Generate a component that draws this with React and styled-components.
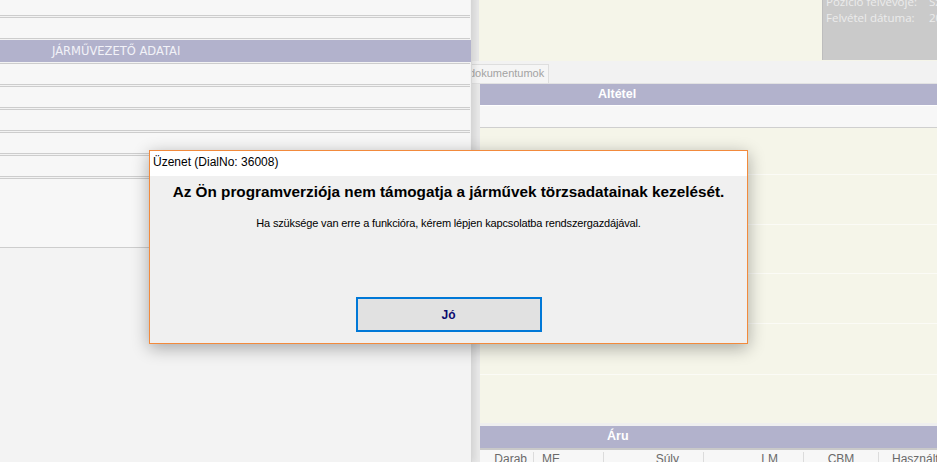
import React from "react";
import styled, { createGlobalStyle } from "styled-components";

const GlobalStyle = createGlobalStyle`
  html, body {
    margin: 0;
    padding: 0;
    background: #f3f3f3;
    overflow: hidden;
  }
  * { box-sizing: border-box; }
`;

const Screen = styled.div`
  position: relative;
  width: 937px;
  height: 462px;
  overflow: hidden;
  display: flex;
  background: #f3f3f3;
  font-family: "Liberation Sans", Arial, sans-serif;
`;

// left form column
const LeftPanel = styled.div`
  position: relative;
  z-index: 1;
  width: 472px;
  flex-shrink: 0;
  display: flex;
  flex-direction: column;
  gap: 1px;
  margin-top: -6px;
  background: #f3f3f3;
  border-right: 1px solid #d6d6d6;
  box-shadow: 3px 0 6px rgba(0, 0, 0, 0.09);
`;

const Field = styled.div`
  height: ${(p) => p.$h || 22}px;
  margin-right: 1px;
  background: #f7f7f7;
  border-top: 1px solid #cdcdcd;
  border-bottom: 1px solid #cdcdcd;
`;

const SectionBar = styled.div`
  height: 22px;
  background: #b2b2cc;
  color: #f2f2f8;
  font-family: "DejaVu Sans", Verdana, sans-serif;
  font-size: 11.5px;
  line-height: 22px;
  padding-left: 52px;
`;

// right detail column
const RightPanel = styled.div`
  flex: 1;
  min-width: 0;
  display: flex;
  flex-direction: column;
  background: #e9e9e9;
`;

const TopArea = styled.div`
  height: 61px;
  margin-left: 7px;
  display: flex;
  background: #f5f5e9;
`;

const Spacer = styled.div`
  flex: 1;
`;

const InfoBox = styled.div`
  width: 115px;
  flex-shrink: 0;
  height: 60px;
  background: #cacaca;
  border-left: 1px solid #bdbdbd;
  padding-left: 3px;
  overflow: hidden;
  color: #ececec;
  font-family: "Open Sans", sans-serif;
  font-size: 11.5px;
`;

const InfoGrid = styled.div`
  margin-top: -6px;
  display: grid;
  grid-template-columns: 103px auto;
  line-height: 16px;
  white-space: nowrap;
`;

const TabStrip = styled.div`
  height: 23px;
  margin-left: -8px;
  padding-top: 3px;
  background: #f2f2f2;
  border-bottom: 1px solid #e2e2e2;
  display: flex;
`;

const Tab = styled.div`
  height: 19px;
  padding: 0 4px;
  background: #f5f5f5;
  border: 1px solid #dedede;
  border-bottom: none;
  color: #a3a3a3;
  font-size: 11px;
  line-height: 17px;
`;

const HeadBar = styled.div`
  height: 22px;
  margin-left: 8px;
  background: #b2b2cc;
  color: #ffffff;
  font-family: "Liberation Sans", Arial, sans-serif;
  font-weight: bold;
  font-size: 12.5px;
  line-height: 20px;
  padding-left: ${(p) => p.$indent}px;
`;

const SubRow = styled.div`
  height: 23px;
  margin-left: 8px;
  background: #f7f7f7;
  border-top: 1px solid #ffffff;
  border-bottom: 1px solid #cfcfcf;
`;

const BeigeArea = styled.div`
  margin-left: 8px;
  height: 295px;
  background: #f5f5e9;
  display: flex;
  flex-direction: column;
`;

const BeigeLine = styled.div`
  height: ${(p) => p.$h}px;
  border-bottom: ${(p) => (p.$last ? "none" : "1px solid #fbfbf6")};
`;

const Gap = styled.div`
  height: 3px;
  margin-left: 8px;
  background: #efefef;
`;

const TableHead = styled.div`
  margin-left: 8px;
  height: 14px;
  border-top: 2px solid #c9c9c9;
  display: flex;
  background: #f7f7f7;
  color: #6a6a6a;
  font-size: 12px;
  line-height: 14px;
  padding-top: 2px;
`;

const Col = styled.div`
  width: ${(p) => p.$w}px;
  flex-shrink: 0;
  border-left: ${(p) => (p.$first ? "none" : "1px solid #dcdcdc")};
  text-align: ${(p) => p.$align || "left"};
  padding: 0 ${(p) => p.$pr || 0}px 0 ${(p) => p.$pl || 0}px;
  white-space: nowrap;
`;

// message dialog
const Dialog = styled.div`
  position: absolute;
  z-index: 5;
  left: 149px;
  top: 150px;
  width: 599px;
  height: 194px;
  display: flex;
  flex-direction: column;
  background: #f0f0f0;
  border: 1px solid #f28a3c;
  box-shadow: 0 4px 16px rgba(0, 0, 0, 0.32);
`;

const TitleBar = styled.div`
  height: 25px;
  background: #ffffff;
  padding-left: 3px;
  font-family: "Liberation Sans", Arial, sans-serif;
  font-size: 12px;
  line-height: 22px;
  color: #000;
`;

const DialogBody = styled.div`
  flex: 1;
  display: flex;
  flex-direction: column;
  align-items: center;
  padding: 7px 0 11px;
`;

const Headline = styled.div`
  font-family: "Liberation Sans", Arial, sans-serif;
  font-weight: bold;
  font-size: 15.3px;
  line-height: 18px;
  color: #000;
  white-space: nowrap;
`;

const Note = styled.div`
  margin-top: 14px;
  font-family: "Liberation Sans", Arial, sans-serif;
  font-size: 11px;
  letter-spacing: -0.15px;
  line-height: 16px;
  color: #000;
  white-space: nowrap;
`;

const OkButton = styled.button`
  margin-top: auto;
  width: 186px;
  height: 35px;
  background: #e1e1e1;
  border: 2px solid #0078d7;
  font-family: "Liberation Sans", Arial, sans-serif;
  font-weight: bold;
  font-size: 12px;
  color: #0a0a6e;
  padding: 0;
`;

const beigeRows = [47, 50, 49, 50, 51, 48];

const App = () => {
  return (
    <Screen>
      <GlobalStyle />
      <LeftPanel>
        <Field />
        <Field />
        <SectionBar>JÁRMŰVEZETŐ ADATAI</SectionBar>
        <Field />
        <Field />
        <Field />
        <Field />
        <Field />
        <Field $h={70} />
      </LeftPanel>

      <RightPanel>
        <TopArea>
          <Spacer />
          <InfoBox>
            <InfoGrid>
              <span>Pozíció felvevője:</span>
              <span>Szabó</span>
              <span>Felvétel dátuma:</span>
              <span>2019.</span>
            </InfoGrid>
          </InfoBox>
        </TopArea>
        <TabStrip>
          <Tab>dokumentumok</Tab>
        </TabStrip>
        <HeadBar $indent={118}>Altétel</HeadBar>
        <SubRow />
        <BeigeArea>
          {beigeRows.map((h, i) => (
            <BeigeLine key={i} $h={h} $last={i === beigeRows.length - 1} />
          ))}
        </BeigeArea>
        <Gap />
        <HeadBar $indent={127}>Áru</HeadBar>
        <TableHead>
          <Col $first $w={53} $align="right" $pr={6}>Darab</Col>
          <Col $w={70} $pl={8}>ME</Col>
          <Col $w={100} $align="right" $pr={24}>Súly</Col>
          <Col $w={100} $align="right" $pr={25}>LM</Col>
          <Col $w={75} $align="center">CBM</Col>
          <Col $w={80} $pl={13}>Használt</Col>
        </TableHead>
      </RightPanel>

      <Dialog>
        <TitleBar>Üzenet (DialNo: 36008)</TitleBar>
        <DialogBody>
          <Headline>Az Ön programverziója nem támogatja a járművek törzsadatainak kezelését.</Headline>
          <Note>Ha szüksége van erre a funkcióra, kérem lépjen kapcsolatba rendszergazdájával.</Note>
          <OkButton>Jó</OkButton>
        </DialogBody>
      </Dialog>
    </Screen>
  );
};

export default App;
